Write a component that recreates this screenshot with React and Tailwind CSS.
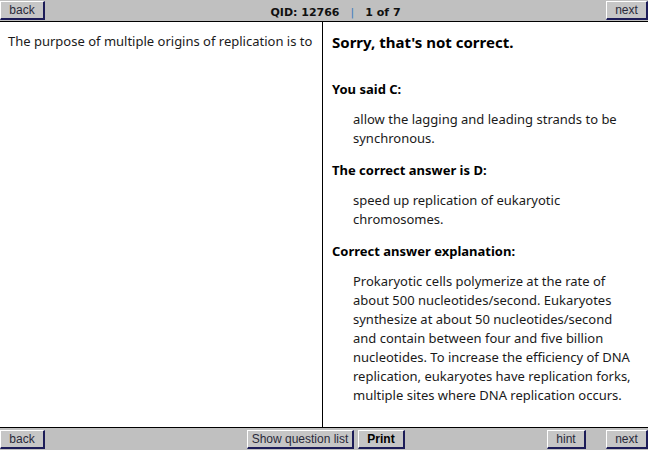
import React from 'react';

const Btn = ({ children, className = '', bold = false }) => (
  <button
    className={`h-[19px] bg-[#c6c6c6] border-t border-l border-t-white border-l-white border-b-2 border-r-2 border-b-[#1c1c58] border-r-[#1c1c58] text-[12px] leading-none font-['Liberation_Sans',Arial,sans-serif] ${bold ? 'font-bold text-black' : 'text-[#2a2a3a]'} ${className}`}
  >
    {children}
  </button>
);

const Section = ({ title, children }) => (
  <div className="mt-[13px]">
    <div className="font-bold text-[13px] leading-[19px] text-black">{title}</div>
    <div className="pl-[21px] mt-[11px] text-[13px] leading-[19px] text-[#1a1a1a]">{children}</div>
  </div>
);

export default function App() {
  return (
    <div className="w-[648px] h-[450px] flex flex-col bg-white overflow-hidden font-['Noto_Sans',sans-serif]">
      <div className="h-[22px] shrink-0 bg-[#c0c0c0] border-b border-black flex items-start justify-between pt-[1px]">
        <Btn className="w-[45px]">back</Btn>
        <div className="pt-[5px] pl-[20px] text-[11px] leading-[13px] font-bold text-[#111] font-['DejaVu_Sans',Verdana,sans-serif] flex items-center">
          <span>QID: 12766</span>
          <span className="mx-[11px] text-[#3a7bbf] font-normal">|</span>
          <span>1 of 7</span>
        </div>
        <Btn className="w-[42px]">next</Btn>
      </div>

      <div className="flex flex-1 min-h-0">
        <div className="w-[323px] shrink-0 border-r border-black px-[8px] pt-[10px] text-[13px] leading-[19px] text-[#1a1a1a]">
          The purpose of multiple origins of replication is to
        </div>
        <div className="flex-1 pl-[9px] pr-[10px] pt-[10px]">
          <div className="font-bold text-[15px] leading-[20px] text-black">Sorry, that's not correct.</div>
          <div className="h-[15px]" />
          <Section title="You said C:">
            allow the lagging and leading strands to be synchronous.
          </Section>
          <Section title="The correct answer is D:">
            speed up replication of eukaryotic chromosomes.
          </Section>
          <Section title="Correct answer explanation:">
            Prokaryotic cells polymerize at the rate of about 500 nucleotides/second. Eukaryotes synthesize at about 50 nucleotides/second and contain between four and five billion nucleotides. To increase the efficiency of DNA replication, eukaryotes have replication forks, multiple sites where DNA replication occurs.
          </Section>
        </div>
      </div>

      <div className="h-[23px] shrink-0 bg-[#c0c0c0] border-t border-black flex items-start pt-[2px]">
        <Btn className="w-[45px]">back</Btn>
        <div className="ml-[202px] flex gap-[4px]">
          <Btn className="w-[107px]">Show question list</Btn>
          <Btn className="w-[47px]" bold>Print</Btn>
        </div>
        <div className="ml-auto flex gap-[20px]">
          <Btn className="w-[39px]">hint</Btn>
          <Btn className="w-[42px]">next</Btn>
        </div>
      </div>
    </div>
  );
}
